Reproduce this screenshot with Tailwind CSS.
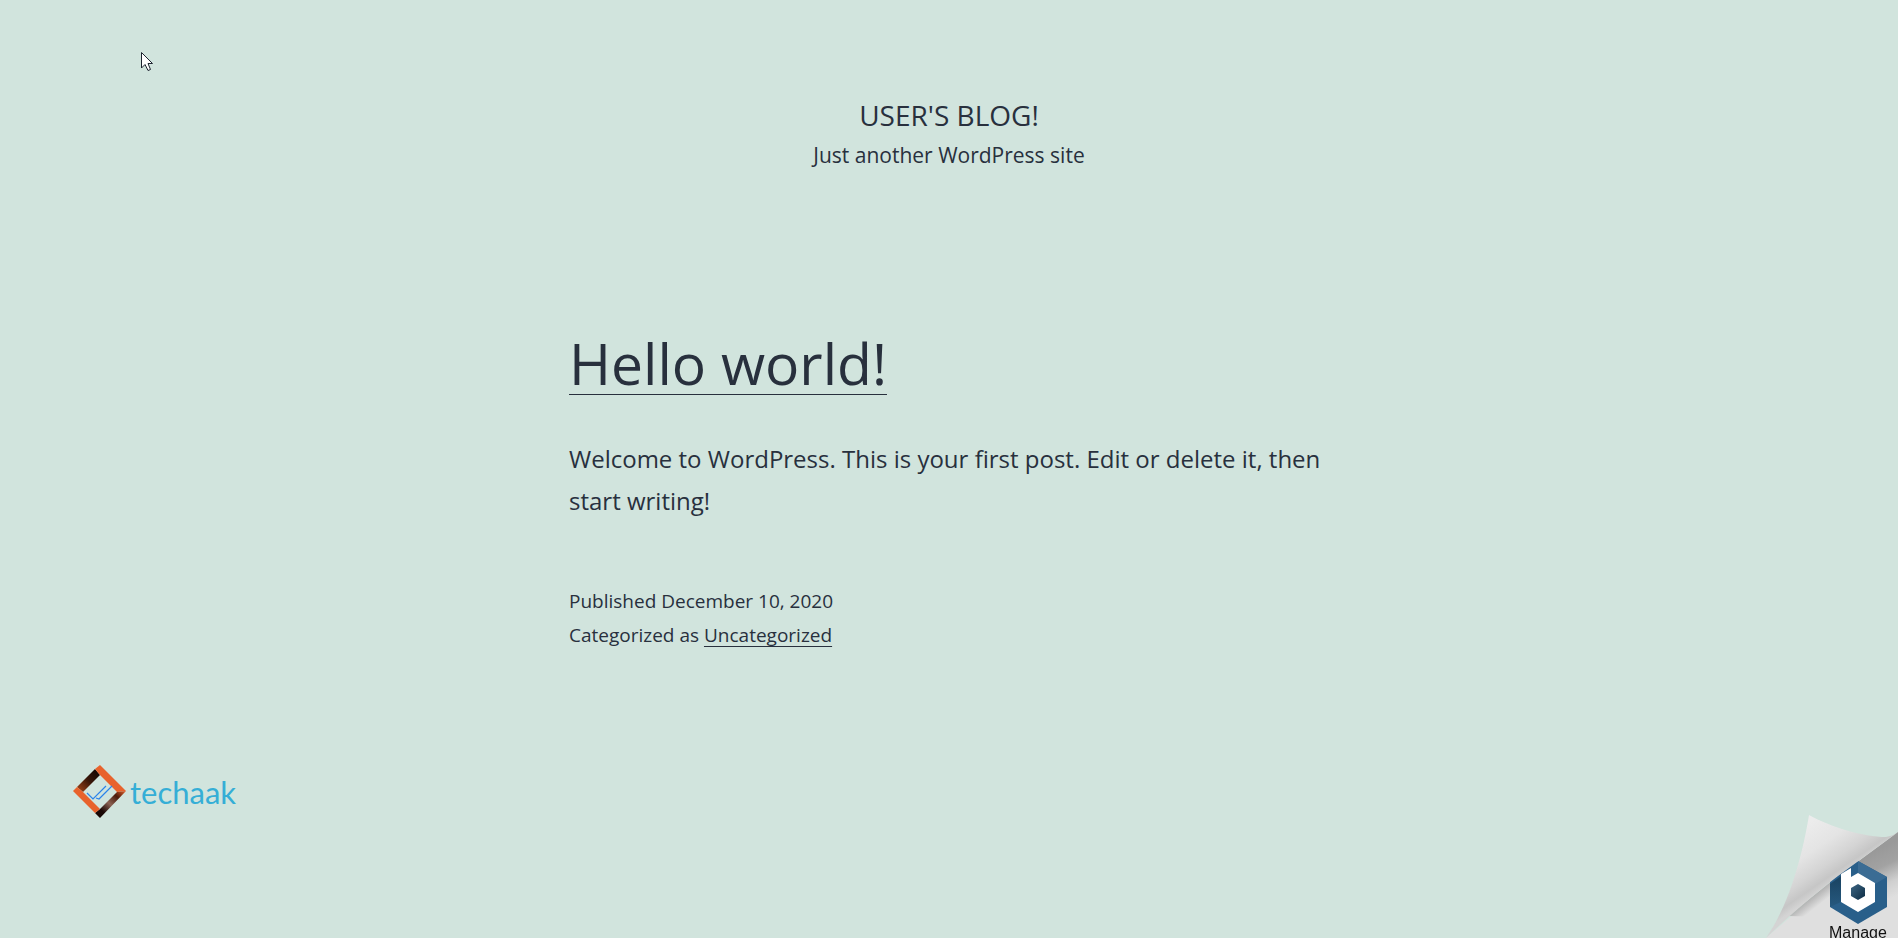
<!DOCTYPE html>
<html lang="en">

<head>
    <meta charset="UTF-8">
    <meta name="viewport" content="width=device-width, initial-scale=1.0">
    <script src="https://cdn.jsdelivr.net/npm/@tailwindcss/browser@4"></script>
    <title>User's Blog!</title>
</head>

<body class="min-h-screen overflow-x-hidden bg-[#d1e4dd] text-[#28303d] font-['Open_Sans',sans-serif]">
    <header class="pt-[95px] text-center">
        <h1 class="text-[28px] leading-10 uppercase"><a href="#">User's Blog!</a></h1>
        <p class="text-[21px] leading-10">Just another WordPress site</p>
    </header>

    <main class="mx-auto mt-37 max-w-[760px]">
        <article>
            <h2 class="text-[57px] leading-[80px]">
                <a href="#" class="underline decoration-1 underline-offset-[9px] [text-decoration-skip-ink:none]">Hello world!</a>
            </h2>
            <p class="mt-[35px] text-[24px] leading-[42px]">Welcome to WordPress. This is your first post. Edit or delete it, then start writing!</p>
            <div class="mt-[62px] text-[19px] leading-[34px]">
                <p>Published December 10, 2020</p>
                <p>Categorized as <a href="#" class="underline decoration-1 underline-offset-4 [text-decoration-skip-ink:none]">Uncategorized</a></p>
            </div>
        </article>
    </main>

    <footer class="mt-28 px-18">
        <a href="#" class="inline-flex items-center gap-0.5">
            <svg class="size-14" viewBox="0 0 56 56" aria-hidden="true">
                <defs>
                    <linearGradient id="dark" x1="0" y1="1" x2="1" y2="0">
                        <stop offset="0" stop-color="#a8481b" />
                        <stop offset=".5" stop-color="#3a1608" />
                        <stop offset="1" stop-color="#0c0402" />
                    </linearGradient>
                    <linearGradient id="shade" x1="1" y1="0" x2="0" y2="1">
                        <stop offset="0" stop-color="#e8622c" />
                        <stop offset=".25" stop-color="#4a1a0a" />
                        <stop offset=".5" stop-color="#8a6152" />
                        <stop offset=".75" stop-color="#1c0906" />
                        <stop offset="1" stop-color="#140705" />
                    </linearGradient>
                </defs>
                <path d="M5 23 L23 5 L28 11 L11 28Z" fill="url(#dark)" />
                <path d="M23 5 L28 1 L54 27 L45 28 L28 11Z" fill="#e8622c" />
                <path d="M54 27 L28 54 L23 49 L28 45 L45 28Z" fill="url(#shade)" />
                <path d="M1 27 L5 23 L11 28 L28 45 L23 49Z" fill="#e8622c" />
                <path d="M15 29 L21 35 L34 22 M24 34 L27 35 L40 22" fill="none" stroke="#2b83ea" stroke-width="1.2" />
            </svg>
            <span class="text-[31px] leading-10 font-['Lato',sans-serif] text-[#35aed6]">techaak</span>
        </a>
    </footer>

    <!-- page peel in the corner -->
    <a href="#" class="fixed right-0 bottom-0">
        <svg class="block size-[140px]" viewBox="0 0 140 140" aria-hidden="true">
            <defs>
                <linearGradient id="under" gradientUnits="userSpaceOnUse" x1="112" y1="55" x2="134" y2="100">
                    <stop offset="0" stop-color="#999" />
                    <stop offset=".35" stop-color="#a2a2a2" />
                    <stop offset=".7" stop-color="#cfcfcf" />
                    <stop offset="1" stop-color="#dfdfdf" />
                </linearGradient>
                <linearGradient id="fold" gradientUnits="userSpaceOnUse" x1="52" y1="24" x2="88" y2="76">
                    <stop offset="0" stop-color="#ececec" />
                    <stop offset=".4" stop-color="#e4e4e4" />
                    <stop offset=".7" stop-color="#d4d4d4" />
                    <stop offset=".88" stop-color="#c6c6c6" />
                    <stop offset="1" stop-color="#d4d4d4" />
                </linearGradient>
                <linearGradient id="shadow" gradientUnits="userSpaceOnUse" x1="72" y1="84" x2="79" y2="93">
                    <stop offset="0" stop-color="#b0b0b0" />
                    <stop offset="1" stop-color="#b0b0b0" stop-opacity="0" />
                </linearGradient>
                <linearGradient id="blue" x1="0" y1="0" x2="0" y2="1">
                    <stop offset="0" stop-color="#194260" />
                    <stop offset="1" stop-color="#26597f" />
                </linearGradient>
                <linearGradient id="core" x1="0" y1="0" x2="1" y2="1">
                    <stop offset="0" stop-color="#3d6684" />
                    <stop offset="1" stop-color="#0d2c43" />
                </linearGradient>
            </defs>
            <path d="M140 34 L80 78 L8 140 H140Z" fill="#dfdfdf" />
            <path d="M30 118 L80 78 L100 63 V120Z" fill="url(#shadow)" />
            <path d="M140 34 L98 65 L104 112 L140 104Z" fill="url(#under)" />
            <path d="M100 63 L129 79 V109 L100 126 L72 109 V79Z" fill="#295f8a" />
            <path d="M72 86 L83 78 V104 L72 109Z" fill="url(#blue)" />
            <path d="M100 63 L129 79 L117 86 L100 76Z" fill="#3b6c94" />
            <path d="M83 76 L93 70 V79 L100 75 L117 85 V104 L100 114 L83 104Z" fill="#fff" />
            <path d="M100 86 L107 90 V98 L100 102 L93 98 V90Z" fill="url(#core)" />
            <path d="M51 17 C73 29 105 39 128 39 C134 38 137 36 140 34 L80 78 C58 95 32 117 8 140 C28 112 43 66 51 17Z" fill="url(#fold)" />
            <text x="71" y="140" font-size="16" font-family="Liberation Sans, Arial, sans-serif" fill="#111">Manage</text>
        </svg>
    </a>

    <!-- pointer -->
    <svg class="absolute top-[51px] left-[140px] h-5 w-3.5" viewBox="0 0 14 20" aria-hidden="true">
        <path d="M1.5 1.5 V17 L5 13.5 L8 19.5 L10.500 18.500 L8 12.500 H12.500Z" fill="#fff" stroke="#1d2430" />
    </svg>
</body>

</html>
